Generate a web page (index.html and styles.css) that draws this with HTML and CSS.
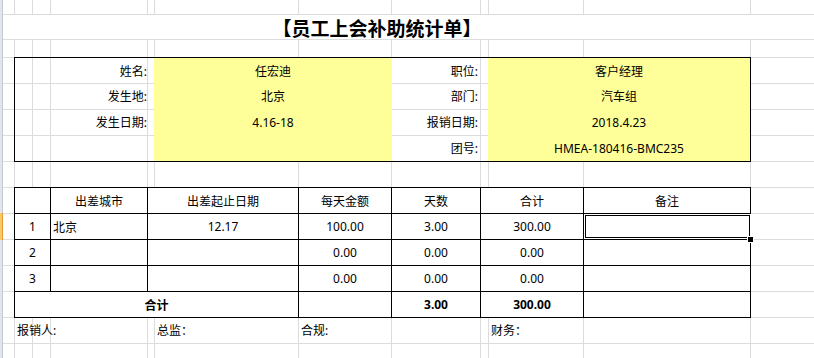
FILE: index.html
```html
<!DOCTYPE html>
<html lang="zh-CN">
<head>
<meta charset="utf-8">
<title>员工上会补助统计单</title>
<link rel="stylesheet" href="styles.css">
</head>
<body>
<div class="sheet">
  <div class="rowhead"><div class="rowsel"></div></div>
  <div class="content">
    <div class="title-row"><div class="title">【员工上会补助统计单】</div></div>

    <div class="info">
      <div class="lab1">姓名:</div><div class="val1">任宏迪</div>
      <div class="lab2">职位:</div><div class="val2">客户经理</div>
      <div class="lab1">发生地:</div><div class="val1">北京</div>
      <div class="lab2">部门:</div><div class="val2">汽车组</div>
      <div class="lab1">发生日期:</div><div class="val1">4.16-18</div>
      <div class="lab2">报销日期:</div><div class="val2">2018.4.23</div>
      <div class="val1"></div>
      <div class="lab2">团号:</div><div class="val2">HMEA-180416-BMC235</div>
    </div>

    <div class="table">
      <div class="c"></div><div class="c">出差城市</div><div class="c">出差起止日期</div><div class="c">每天金额</div><div class="c">天数</div><div class="c">合计</div><div class="c">备注</div>
      <div class="c">1</div><div class="c left">北京</div><div class="c">12.17</div><div class="c">100.00</div><div class="c">3.00</div><div class="c">300.00</div><div class="c sel"></div>
      <div class="c">2</div><div class="c left"></div><div class="c"></div><div class="c">0.00</div><div class="c">0.00</div><div class="c">0.00</div><div class="c"></div>
      <div class="c">3</div><div class="c left"></div><div class="c"></div><div class="c">0.00</div><div class="c">0.00</div><div class="c">0.00</div><div class="c"></div>
      <div class="c total">合计</div><div class="c"></div><div class="c bold">3.00</div><div class="c bold">300.00</div><div class="c"></div>
    </div>

    <div class="footer">
      <div class="f">报销人:</div>
      <div class="f">总监：</div>
      <div class="f">合规:</div>
      <div class="f">财务：</div>
    </div>
  </div>
</div>
</body>
</html>
```
FILE: styles.css
```css
* { box-sizing: border-box; }

html, body {
  margin: 0;
  padding: 0;
  background: #fff;
}

body {
  font-family: "Noto Sans", "Noto Sans CJK SC", sans-serif;
  font-size: 12px;
  color: #000;
}

.sheet {
  --gl: linear-gradient(#dadcdd, #dadcdd);
  width: 814px;
  height: 358px;
  overflow: hidden;
  display: flex;
  background:
    var(--gl) 14px 0 / 1px 100% no-repeat,
    var(--gl) 32px 0 / 1px 100% no-repeat,
    var(--gl) 50px 0 / 1px 100% no-repeat,
    var(--gl) 147px 0 / 1px 100% no-repeat,
    var(--gl) 154px 0 / 1px 100% no-repeat,
    var(--gl) 298px 0 / 1px 100% no-repeat,
    var(--gl) 391px 0 / 1px 100% no-repeat,
    var(--gl) 480px 0 / 1px 100% no-repeat,
    var(--gl) 488px 0 / 1px 100% no-repeat,
    var(--gl) 583px 0 / 1px 100% no-repeat,
    var(--gl) 750px 0 / 1px 100% no-repeat,
    var(--gl) 0 14px / 100% 1px no-repeat,
    var(--gl) 0 39px / 100% 1px no-repeat,
    var(--gl) 0 57px / 100% 1px no-repeat,
    var(--gl) 0 83px / 100% 1px no-repeat,
    var(--gl) 0 109px / 100% 1px no-repeat,
    var(--gl) 0 135px / 100% 1px no-repeat,
    var(--gl) 0 161px / 100% 1px no-repeat,
    var(--gl) 0 187px / 100% 1px no-repeat,
    var(--gl) 0 213px / 100% 1px no-repeat,
    var(--gl) 0 239px / 100% 1px no-repeat,
    var(--gl) 0 265px / 100% 1px no-repeat,
    var(--gl) 0 291px / 100% 1px no-repeat,
    var(--gl) 0 317px / 100% 1px no-repeat,
    var(--gl) 0 343px / 100% 1px no-repeat,
    #fff;
}

/* row header edge */
.rowhead {
  flex: none;
  width: 3px;
  background: #e2e5ea;
  border-right: 1px solid #c4c9d1;
}
.rowsel {
  margin-top: 213px;
  height: 27px;
  background: #f6c867;
  border-right: 1px solid #e29b34;
  margin-right: -1px;
}

.content {
  flex: 1;
  display: flex;
  flex-direction: column;
}

/* title */
.title-row {
  padding-top: 15px;
}
.title {
  width: 748px;
  height: 24px;
  background: #fff;
  text-align: center;
  font-family: "Noto Sans CJK SC", sans-serif;
  font-weight: 700;
  font-size: 19px;
  line-height: 26px;
}

/* info block */
.info {
  margin-top: 18px;
  margin-left: 11px;
  width: 737px;
  height: 105px;
  border: 1px solid #000;
  display: grid;
  grid-template-columns: 132px 7px 238px 88px 8px 262px;
  grid-template-rows: 25px 26px 26px 26px;
}
.lab1, .lab2, .val1, .val2 {
  display: flex;
  align-items: center;
}
.lab1 { grid-column: 1; justify-content: flex-end; padding-right: 0; }
.lab2 { grid-column: 4; justify-content: flex-end; padding-right: 2px; }
.val1 { grid-column: 3; justify-content: center; background: #ffff99; }
.val2 { grid-column: 6; justify-content: center; background: #ffff99; }

/* detail table */
.table {
  margin-top: 25px;
  margin-left: 11px;
  width: 737px;
  background: #000;
  padding: 1px;
  display: grid;
  gap: 1px;
  grid-template-columns: 35px 96px 150px 92px 88px 102px 166px;
  grid-template-rows: repeat(5, 25px);
}
.c {
  background: #fff;
  display: flex;
  align-items: center;
  justify-content: center;
}
.c.left { justify-content: flex-start; padding-left: 2px; }
.c.total { grid-column: span 3; font-weight: 700; }
.c.bold { font-weight: 700; }

.c.sel { position: relative; }
.c.sel::before {
  content: "";
  position: absolute;
  inset: 0 -1px 0 0;
  box-shadow: inset 0 0 0 1px #fff, inset 0 0 0 2px #000;
}
.c.sel::after {
  content: "";
  position: absolute;
  right: -3px;
  bottom: -3px;
  width: 5px;
  height: 5px;
  background: #000;
  outline: 1px solid #fff;
}

/* footer */
.footer {
  margin-left: 11px;
  height: 25px;
  display: grid;
  grid-template-columns: 140px 144px 190px auto;
}
.f {
  padding-left: 3px;
  line-height: 25px;
}
```
